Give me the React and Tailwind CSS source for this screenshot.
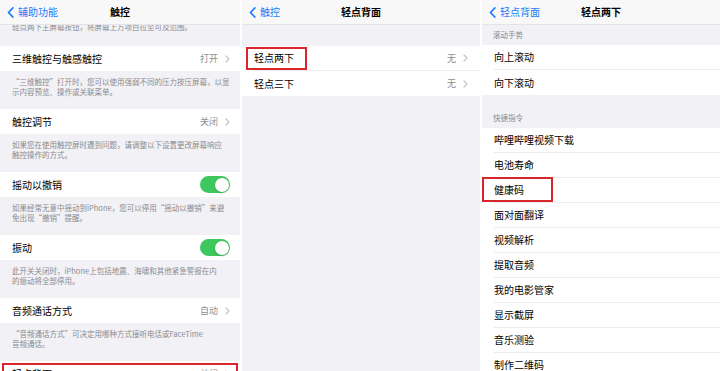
import React from "react";

const Chevron = () => (
  <svg width="5" height="8" viewBox="0 0 5 8" className="shrink-0">
    <path d="M1 1l3 3-3 3" stroke="#c4c4c8" strokeWidth="1.2" fill="none" strokeLinecap="round" strokeLinejoin="round" />
  </svg>
);

const Back = () => (
  <svg width="7" height="11" viewBox="0 0 7 11" className="shrink-0">
    <path d="M5.8 1L1.5 5.5 5.8 10" stroke="#1a7cf5" strokeWidth="1.8" fill="none" strokeLinecap="round" strokeLinejoin="round" />
  </svg>
);

const Header = ({ back, title }) => (
  <div className="h-[25px] shrink-0 grid grid-cols-[1fr_auto_1fr] items-center bg-[#f8f8f9] border-b border-[#e4e4e8] px-[7px]">
    <div className="flex items-center gap-[4px] text-[10px] leading-none text-[#1a7cf5]">
      <Back />
      <span>{back}</span>
    </div>
    <div className="text-[10px] leading-none font-semibold text-black">{title}</div>
    <div />
  </div>
);

const Toggle = () => (
  <div className="w-[30px] h-[17px] rounded-full bg-[#3ec75c] flex items-center justify-end p-[1.5px]">
    <div className="w-[14px] h-[14px] rounded-full bg-white shadow-[0_1px_2px_rgba(0,0,0,0.2)]" />
  </div>
);

const Row = ({ label, value, toggle, box, boxClass }) => (
  <div className="relative h-[25px] shrink-0 bg-white flex items-center justify-between pl-[12px] pr-[10px]">
    <span className="text-[10px] leading-none text-black">{label}</span>
    {toggle ? (
      <Toggle />
    ) : value ? (
      <span className="flex items-center gap-[7px] text-[9px] leading-none text-[#8e8e93]">
        {value}
        <Chevron />
      </span>
    ) : null}
    {box && <div className={"absolute border-2 border-[#d9262c] " + boxClass} />}
  </div>
);

const Desc = ({ lines }) => (
  <div className="shrink-0 pt-[6px] pb-[12px] pl-[12px] text-[7.5px] leading-[10px] text-[#8a8a8e] whitespace-nowrap">
    {lines.map((l, i) => (
      <div key={i}>{l}</div>
    ))}
  </div>
);

const ListRow = ({ label, value, last, box, boxClass }) => (
  <div className="relative h-[25px] shrink-0 bg-white flex items-center">
    <div className={"flex-1 h-full ml-[12px] flex items-center justify-between pr-[12px] " + (last ? "" : "border-b border-[#ececef]")}>
      <span className="text-[10px] leading-none text-black">{label}</span>
      {value && (
        <span className="flex items-center gap-[7px] text-[9px] leading-none text-[#8e8e93]">
          {value}
          <Chevron />
        </span>
      )}
    </div>
    {box && <div className={"absolute border-2 border-[#d9262c] " + boxClass} />}
  </div>
);

export default function App() {
  const shortcuts = [
    "哔哩哔哩视频下载",
    "电池寿命",
    "健康码",
    "面对面翻译",
    "视频解析",
    "提取音频",
    "我的电影管家",
    "显示截屏",
    "音乐测验",
    "制作二维码",
  ];
  return (
    <div className="w-[720px] h-[371px] overflow-hidden flex gap-[2px] bg-white font-['Noto_Sans_CJK_SC','Noto_Sans',sans-serif]">
      {/* Left panel */}
      <div className="w-[240px] h-full flex flex-col bg-[#f2f2f6] overflow-hidden">
        <Header back="辅助功能" title="触控" />
        <div className="h-[21px] shrink-0 overflow-hidden">
          <div className="-mt-[3px] pl-[12px] text-[7.5px] leading-[10px] text-[#8a8a8e] whitespace-nowrap">
            轻点两下主屏幕按钮，将屏幕上方项目拉至可及范围。
          </div>
        </div>
        <Row label="三维触控与触感触控" value="打开" />
        <Desc lines={["“三维触控”打开时，您可以使用强弱不同的压力按压屏幕，以显", "示内容预览、操作或关联菜单。"]} />
        <Row label="触控调节" value="关闭" />
        <Desc lines={["如果您在使用触控屏时遇到问题，请调整以下设置更改屏幕响应", "触控操作的方式。"]} />
        <Row label="摇动以撤销" toggle />
        <Desc lines={["如果经常无意中摇动到iPhone，您可以停用“摇动以撤销”来避", "免出现“撤销”提醒。"]} />
        <Row label="振动" toggle />
        <Desc lines={["此开关关闭时，iPhone上包括地震、海啸和其他紧急警报在内", "的振动将全部停用。"]} />
        <Row label="音频通话方式" value="自动" />
        <Desc lines={["“音频通话方式”可决定用哪种方式接听电话或FaceTime", "音频通话。"]} />
        <Row label="轻点背面" value="关闭" box boxClass="left-[2px] right-[2px] top-[2px] h-[30px]" />
      </div>

      {/* Middle panel */}
      <div className="w-[238px] h-full flex flex-col bg-[#f2f2f6] overflow-hidden">
        <Header back="触控" title="轻点背面" />
        <div className="h-[21px] shrink-0" />
        <ListRow label="轻点两下" value="无" box boxClass="left-[4px] w-[61px] top-[1px] bottom-[1px]" />
        <ListRow label="轻点三下" value="无" last />
      </div>

      {/* Right panel */}
      <div className="w-[238px] h-full flex flex-col bg-[#f2f2f6] overflow-hidden">
        <Header back="轻点背面" title="轻点两下" />
        <div className="shrink-0 pt-[5px] pb-[5px] pl-[11px] text-[7.5px] leading-[10px] text-[#8a8a8e]">滚动手势</div>
        <ListRow label="向上滚动" />
        <ListRow label="向下滚动" last />
        <div className="shrink-0 pt-[18px] pb-[5px] pl-[11px] text-[7.5px] leading-[10px] text-[#8a8a8e]">快捷指令</div>
        {shortcuts.map((s) => (
          <ListRow
            key={s}
            label={s}
            box={s === "健康码"}
            boxClass="left-0 w-[71px] -top-[1px] h-[25px]"
          />
        ))}
      </div>
    </div>
  );
}
